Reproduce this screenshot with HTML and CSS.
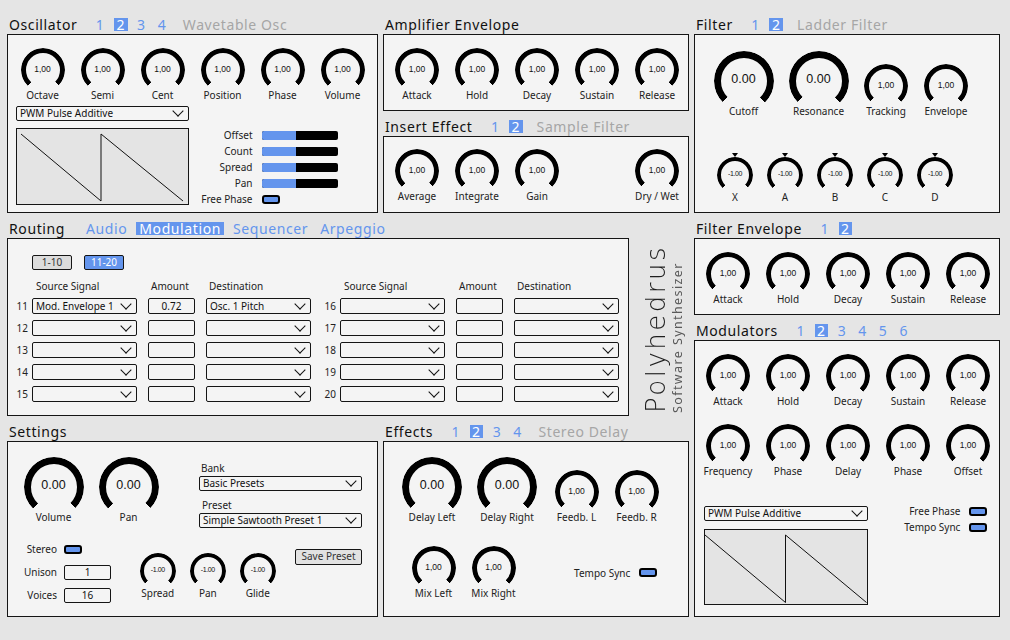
FILE: index.html
```html
<!DOCTYPE html>
<html>
<head>
<meta charset="utf-8">
<title>Polyhedrus</title>
<link rel="stylesheet" href="styles.css">
</head>
<body>
<div class="app">
  <div class="main">
    <!-- ROW 1 -->
    <div class="row">
      <section class="sec w371">
        <div class="ttl">Oscillator<span class="tabs"><span>1</span><span class="on">2</span><span>3</span><span>4</span></span><span class="sub">Wavetable Osc</span></div>
        <div class="panel p-osc">
          <div class="krow k-osc">
            <div class="kn"><div class="dial">1,00</div><span>Octave</span></div>
            <div class="kn"><div class="dial">1,00</div><span>Semi</span></div>
            <div class="kn"><div class="dial">1,00</div><span>Cent</span></div>
            <div class="kn"><div class="dial">1,00</div><span>Position</span></div>
            <div class="kn"><div class="dial">1,00</div><span>Phase</span></div>
            <div class="kn"><div class="dial">1,00</div><span>Volume</span></div>
          </div>
          <div class="osc-low">
            <div class="wavecol">
              <div class="sel s15">PWM Pulse Additive</div>
              <div class="wave"><svg width="170.5" height="75" viewBox="0 0 170.5 75"><polyline points="4,5 84,72 84,5 166,72" fill="none" stroke="#111" stroke-width="1"/></svg></div>
            </div>
            <div class="sliders">
              <span>Offset</span><div class="bar"><i></i></div>
              <span>Count</span><div class="bar"><i></i></div>
              <span>Spread</span><div class="bar"><i></i></div>
              <span>Pan</span><div class="bar"><i></i></div>
              <span>Free Phase</span><div class="tog"></div>
            </div>
          </div>
        </div>
      </section>
      <div class="sec w306">
        <section class="sec">
          <div class="ttl">Amplifier Envelope</div>
          <div class="panel p77">
            <div class="krow k-env">
              <div class="kn"><div class="dial">1,00</div><span>Attack</span></div>
              <div class="kn"><div class="dial">1,00</div><span>Hold</span></div>
              <div class="kn"><div class="dial">1,00</div><span>Decay</span></div>
              <div class="kn"><div class="dial">1,00</div><span>Sustain</span></div>
              <div class="kn"><div class="dial">1,00</div><span>Release</span></div>
            </div>
          </div>
        </section>
        <section class="sec">
          <div class="ttl">Insert Effect<span class="tabs"><span>1</span><span class="on">2</span></span><span class="sub">Sample Filter</span></div>
          <div class="panel p77">
            <div class="krow k-ins">
              <div class="kn"><div class="dial">1,00</div><span>Average</span></div>
              <div class="kn"><div class="dial">1,00</div><span>Integrate</span></div>
              <div class="kn"><div class="dial">1,00</div><span>Gain</span></div>
              <div class="kn"></div>
              <div class="kn"><div class="dial">1,00</div><span>Dry / Wet</span></div>
            </div>
          </div>
        </section>
      </div>
    </div>

    <!-- ROW 2 -->
    <div class="row">
      <section class="sec w627">
        <div class="ttl">Routing<span class="tabs words"><span>Audio</span><span class="on">Modulation</span><span>Sequencer</span><span>Arpeggio</span></span></div>
        <div class="panel p-rout">
          <div class="rbtns"><div class="btn">1-10</div><div class="btn on">11-20</div></div>
          <div class="rgrids">
            <div class="rgrid">
              <span></span><span class="h c1">Source Signal</span><span class="h c2">Amount</span><span class="h c3">Destination</span>
              <span class="num">11</span><div class="sel c1">Mod. Envelope 1</div><div class="inp c2">0.72</div><div class="sel c3">Osc. 1 Pitch</div>
              <span class="num">12</span><div class="sel c1"></div><div class="inp c2"></div><div class="sel c3"></div>
              <span class="num">13</span><div class="sel c1"></div><div class="inp c2"></div><div class="sel c3"></div>
              <span class="num">14</span><div class="sel c1"></div><div class="inp c2"></div><div class="sel c3"></div>
              <span class="num">15</span><div class="sel c1"></div><div class="inp c2"></div><div class="sel c3"></div>
            </div>
            <div class="rgrid">
              <span></span><span class="h c1">Source Signal</span><span class="h c2">Amount</span><span class="h c3">Destination</span>
              <span class="num">16</span><div class="sel c1"></div><div class="inp c2"></div><div class="sel c3"></div>
              <span class="num">17</span><div class="sel c1"></div><div class="inp c2"></div><div class="sel c3"></div>
              <span class="num">18</span><div class="sel c1"></div><div class="inp c2"></div><div class="sel c3"></div>
              <span class="num">19</span><div class="sel c1"></div><div class="inp c2"></div><div class="sel c3"></div>
              <span class="num">20</span><div class="sel c1"></div><div class="inp c2"></div><div class="sel c3"></div>
            </div>
          </div>
        </div>
      </section>
      <div class="logo">
        <div class="logo-in">
          <div class="p1">Polyhedrus</div>
          <div class="p2">Software Synthesizer</div>
        </div>
      </div>
    </div>

    <!-- ROW 3 -->
    <div class="row">
      <section class="sec w371">
        <div class="ttl">Settings</div>
        <div class="panel p176">
          <div class="set-top">
            <div class="krow k-set">
              <div class="kn big"><div class="dial">0.00</div><span>Volume</span></div>
              <div class="kn big"><div class="dial">0.00</div><span>Pan</span></div>
            </div>
            <div class="presets">
              <span class="plbl">Bank</span>
              <div class="sel s15">Basic Presets</div>
              <span class="plbl pl2">Preset</span>
              <div class="sel s15">Simple Sawtooth Preset 1</div>
            </div>
          </div>
          <div class="set-bot">
            <div class="fields">
              <span>Stereo</span><div class="tog"></div>
              <span>Unison</span><div class="inp s15">1</div>
              <span>Voices</span><div class="inp s15">16</div>
            </div>
            <div class="krow k-setmini">
              <div class="kn mini"><div class="dial">-1.00</div><span>Spread</span></div>
              <div class="kn mini"><div class="dial">-1.00</div><span>Pan</span></div>
              <div class="kn mini"><div class="dial">-1.00</div><span>Glide</span></div>
            </div>
            <div class="btn save">Save Preset</div>
          </div>
        </div>
      </section>
      <section class="sec w306">
        <div class="ttl">Effects<span class="tabs"><span>1</span><span class="on">2</span><span>3</span><span>4</span></span><span class="sub">Stereo Delay</span></div>
        <div class="panel p176">
          <div class="krow k-eff">
            <div class="kn big"><div class="dial">0.00</div><span>Delay Left</span></div>
            <div class="kn big"><div class="dial">0.00</div><span>Delay Right</span></div>
            <div class="kn ml2"><div class="dial">1,00</div><span>Feedb. L</span></div>
            <div class="kn"><div class="dial">1,00</div><span>Feedb. R</span></div>
          </div>
          <div class="eff-bot">
            <div class="krow">
              <div class="kn"><div class="dial">1,00</div><span>Mix Left</span></div>
              <div class="kn"><div class="dial">1,00</div><span>Mix Right</span></div>
            </div>
            <div class="sync"><span>Tempo Sync</span><div class="tog"></div></div>
          </div>
        </div>
      </section>
    </div>
  </div>

  <!-- RIGHT COLUMN -->
  <div class="side">
    <section class="sec">
      <div class="ttl">Filter<span class="tabs"><span>1</span><span class="on">2</span></span><span class="sub">Ladder Filter</span></div>
      <div class="panel p-fil">
        <div class="krow k-fil">
          <div class="kn big"><div class="dial">0.00</div><span>Cutoff</span></div>
          <div class="kn big"><div class="dial">0.00</div><span>Resonance</span></div>
          <div class="kn"><div class="dial">1,00</div><span>Tracking</span></div>
          <div class="kn"><div class="dial">1,00</div><span>Envelope</span></div>
        </div>
        <div class="krow k-filmini">
          <div class="kn mini mark"><div class="dial">-1.00</div><span>X</span></div>
          <div class="kn mini mark"><div class="dial">-1.00</div><span>A</span></div>
          <div class="kn mini mark"><div class="dial">-1.00</div><span>B</span></div>
          <div class="kn mini mark"><div class="dial">-1.00</div><span>C</span></div>
          <div class="kn mini mark"><div class="dial">-1.00</div><span>D</span></div>
        </div>
      </div>
    </section>
    <section class="sec">
      <div class="ttl">Filter Envelope<span class="tabs"><span>1</span><span class="on">2</span></span></div>
      <div class="panel p77">
        <div class="krow k-env">
          <div class="kn"><div class="dial">1,00</div><span>Attack</span></div>
          <div class="kn"><div class="dial">1,00</div><span>Hold</span></div>
          <div class="kn"><div class="dial">1,00</div><span>Decay</span></div>
          <div class="kn"><div class="dial">1,00</div><span>Sustain</span></div>
          <div class="kn"><div class="dial">1,00</div><span>Release</span></div>
        </div>
      </div>
    </section>
    <section class="sec">
      <div class="ttl">Modulators<span class="tabs"><span>1</span><span class="on">2</span><span>3</span><span>4</span><span>5</span><span>6</span></span></div>
      <div class="panel p-mod">
        <div class="krow k-env">
          <div class="kn"><div class="dial">1,00</div><span>Attack</span></div>
          <div class="kn"><div class="dial">1,00</div><span>Hold</span></div>
          <div class="kn"><div class="dial">1,00</div><span>Decay</span></div>
          <div class="kn"><div class="dial">1,00</div><span>Sustain</span></div>
          <div class="kn"><div class="dial">1,00</div><span>Release</span></div>
        </div>
        <div class="krow k-mod2">
          <div class="kn"><div class="dial">1,00</div><span>Frequency</span></div>
          <div class="kn"><div class="dial">1,00</div><span>Phase</span></div>
          <div class="kn"><div class="dial">1,00</div><span>Delay</span></div>
          <div class="kn"><div class="dial">1,00</div><span>Phase</span></div>
          <div class="kn"><div class="dial">1,00</div><span>Offset</span></div>
        </div>
        <div class="mod-low">
          <div class="wavecol mw">
            <div class="sel s15">PWM Pulse Additive</div>
            <div class="wave"><svg width="161.5" height="74.5" viewBox="0 0 161.5 74.5"><polyline points="0,5 80.5,72.5 80.5,5 161.5,72.5" fill="none" stroke="#111" stroke-width="1"/></svg></div>
          </div>
          <div class="modtogs">
            <span>Free Phase</span><div class="tog"></div>
            <span>Tempo Sync</span><div class="tog"></div>
          </div>
        </div>
      </div>
    </section>
  </div>
</div>
</body>
</html>
```

FILE: styles.css
```css
* { box-sizing: border-box; }
html, body { margin: 0; padding: 0; }
body {
  width: 1010px;
  height: 640px;
  overflow: hidden;
  background: #e5e5e5;
  font-family: "Noto Sans", "DejaVu Sans", sans-serif;
  font-size: 10px;
  color: #222;
}

.app { display: flex; gap: 5px; padding: 9px 0 0 7px; }
.main { width: 682px; display: flex; flex-direction: column; }
.side { width: 306px; display: flex; flex-direction: column; }
.row { display: flex; gap: 5px; }
.sec { display: flex; flex-direction: column; }
.w371 { width: 371px; }
.w306 { width: 306px; }
.w627 { width: 627px; }

/* titles */
.ttl {
  height: 25px;
  padding: 9px 0 0 2px;
  display: flex;
  align-items: baseline;
  font-size: 14px;
  line-height: 14px;
  letter-spacing: .6px;
  color: #111;
  white-space: nowrap;
}
.tabs { display: flex; align-items: baseline; margin-left: 16px; }
.tabs span {
  display: inline-block;
  padding: 0 2.5px;
  margin-right: 7px;
  line-height: 13px;
  color: #6495ed;
}
.tabs span.on { background: #6495ed; color: #fff; }
.tabs.words { margin-left: 18px; }
.tabs.words span { padding: 0 3px; margin-right: 6px; }
.sub { margin-left: 7px; color: #a6a6a6; }

/* panels */
.panel { border: 1px solid #151515; background: #f4f4f4; }
.p-osc { height: 179px; }
.p77 { height: 77px; }
.p-rout { height: 178px; padding-top: 16px; }
.p176 { height: 176px; }
.p-fil { height: 179px; }
.p-mod { height: 277px; }

/* knobs */
.krow { display: flex; align-items: flex-end; }
.kn { width: 60px; flex: none; display: flex; flex-direction: column; align-items: center; }
.kn > span { margin-top: -3px; line-height: 12px; white-space: nowrap; color: #222; }
.dial {
  position: relative;
  width: 44px;
  height: 44px;
  display: flex;
  align-items: center;
  justify-content: center;
  padding-bottom: 2px;
  font-family: "Liberation Sans", Arial, sans-serif;
  font-size: 8.5px;
  color: #111;
}
.dial::before {
  content: "";
  position: absolute;
  inset: 0;
  border-radius: 50%;
  border: 5px solid #000;
  -webkit-mask: conic-gradient(from 225deg, #000 270deg, transparent 0);
  mask: conic-gradient(from 225deg, #000 270deg, transparent 0);
}
.big { width: 75px; }
.big .dial { width: 60px; height: 60px; font-size: 12.5px; padding-bottom: 4px; }
.big .dial::before { border-width: 7px; }
.big > span { margin-top: -6px; }
.mini { width: 50px; }
.mini .dial { width: 36px; height: 36px; font-size: 7px; letter-spacing: -.4px; padding-bottom: 3px; }
.mini .dial::before { border-width: 4px; }
.mini > span { margin-top: -2px; }
.mark .dial::after {
  content: "";
  position: absolute;
  top: -4px;
  left: 50%;
  margin-left: -3px;
  border-left: 3px solid transparent;
  border-right: 3px solid transparent;
  border-top: 4px solid #000;
}
.ml2 { margin-left: 2px; }

.k-osc { padding: 13px 0 0 4.5px; }
.k-env { padding: 13px 0 0 3px; }
.k-ins { padding: 12px 0 0 3px; }
.k-fil { padding: 16px 0 0 11px; }
.k-filmini { padding: 40px 0 0 15px; }
.k-mod2 { padding: 17px 0 0 3px; }
.k-set { padding-left: 8px; }
.k-eff { padding: 15px 0 0 10.5px; }

/* controls */
.sel {
  position: relative;
  height: 16px;
  border: 1px solid #151515;
  border-radius: 2px;
  padding-left: 3px;
  line-height: 14px;
  white-space: nowrap;
  overflow: hidden;
  color: #111;
}
.sel::after {
  content: "";
  position: absolute;
  right: 6px;
  top: 1px;
  width: 7px;
  height: 7px;
  border-right: 1.2px solid #111;
  border-bottom: 1.2px solid #111;
  transform: rotate(45deg);
}
.sel.s15 { height: 15px; line-height: 13px; }
.sel.s15::after { top: 0; }
.inp {
  height: 16px;
  border: 1px solid #151515;
  border-radius: 2px;
  text-align: center;
  line-height: 14px;
  color: #111;
}
.inp.s15 { height: 15px; line-height: 13px; }
.tog {
  width: 18px;
  height: 9px;
  border: 2px solid #000;
  border-radius: 3px;
  background: #6495ed;
}
.btn {
  width: 40px;
  height: 15px;
  border: 1px solid #151515;
  border-radius: 2px;
  background: #dcdcdc;
  text-align: center;
  line-height: 13px;
  color: #333;
}
.btn.on { background: #6495ed; color: #fff; }
.wave { border: 1px solid #151515; background: #e4e4e4; }
.wave svg { display: block; }

/* oscillator lower area */
.osc-low { display: flex; padding-left: 8px; margin-top: 5px; }
.wavecol { width: 172.5px; display: flex; flex-direction: column; gap: 7px; }
.sliders {
  display: grid;
  grid-template-columns: 52px 76px;
  grid-auto-rows: 16px;
  column-gap: 9px;
  align-items: center;
  margin: 21px 0 0 12px;
}
.sliders > span { text-align: right; white-space: nowrap; }
.bar { height: 9px; background: #000; border-radius: 2px; overflow: hidden; }
.bar i { display: block; width: 46%; height: 100%; background: #6495ed; }

/* routing */
.rbtns { display: flex; gap: 12px; margin-left: 24px; }
.rgrids { display: flex; margin-top: 10px; }
.rgrid {
  display: grid;
  grid-template-columns: 20px 109px 58px 116px;
  grid-template-rows: 12px repeat(5, 16px);
  row-gap: 6px;
  align-items: center;
}
.rgrid + .rgrid { margin-left: 5px; }
.num { text-align: right; line-height: 16px; color: #222; }
.c1 { margin-left: 4px; }
.c2, .c3 { margin-left: 11px; }
.h { line-height: 12px; white-space: nowrap; }
.h.c1 { padding-left: 4px; }
.h.c2, .h.c3 { padding-left: 3px; }

/* logo */
.logo { width: 55px; height: 178px; margin-top: 25px; padding-left: 8.5px; }
.logo-in {
  writing-mode: vertical-rl;
  transform: rotate(180deg);
  width: 43px;
  height: 178px;
  padding-top: 2.5px;
  white-space: nowrap;
}
.p1 {
  font-family: "DejaVu Sans", sans-serif;
  font-weight: 200;
  font-size: 26px;
  line-height: 26px;
  letter-spacing: 2.5px;
  color: #1e1e1e;
}
.p2 { font-size: 12.5px; line-height: 17px; letter-spacing: 1.4px; color: #5a5a5a; }

/* settings */
.set-top { display: flex; align-items: flex-start; padding-top: 15px; }
.presets { width: 162.5px; margin: 4.7px 0 0 33px; display: flex; flex-direction: column; }
.plbl { line-height: 12px; padding-left: 2px; }
.presets .sel { margin-top: 2px; }
.plbl.pl2 { margin-top: 8.3px; padding-left: 3px; }
.set-bot { display: flex; align-items: flex-start; margin-top: 14px; }
.fields {
  display: grid;
  grid-template-columns: 49px 47px;
  grid-template-rows: repeat(3, 15px);
  column-gap: 7px;
  row-gap: 8px;
  align-items: center;
}
.fields > span { text-align: right; }
.fields .tog { justify-self: start; }
.k-setmini { margin: 11.3px 0 0 21.8px; }
.btn.save { width: 66.5px; height: 15.5px; margin: 7.3px 0 0 12.5px; background: #e2e2e2; }

/* effects */
.eff-bot { display: flex; align-items: center; margin-top: 23px; padding-left: 19.5px; }
.sync { margin-left: auto; margin-right: 31px; display: flex; align-items: center; gap: 8.7px; }

/* modulators lower */
.mod-low { display: flex; align-items: flex-start; margin-top: 29px; padding-left: 9px; }
.wavecol.mw { width: 163.5px; gap: 7.7px; }
.modtogs {
  margin: -3px 12.3px 0 auto;
  display: grid;
  grid-template-columns: auto 18px;
  grid-auto-rows: 16px;
  column-gap: 8.3px;
  align-items: center;
}
.modtogs > span { text-align: right; white-space: nowrap; }
```
